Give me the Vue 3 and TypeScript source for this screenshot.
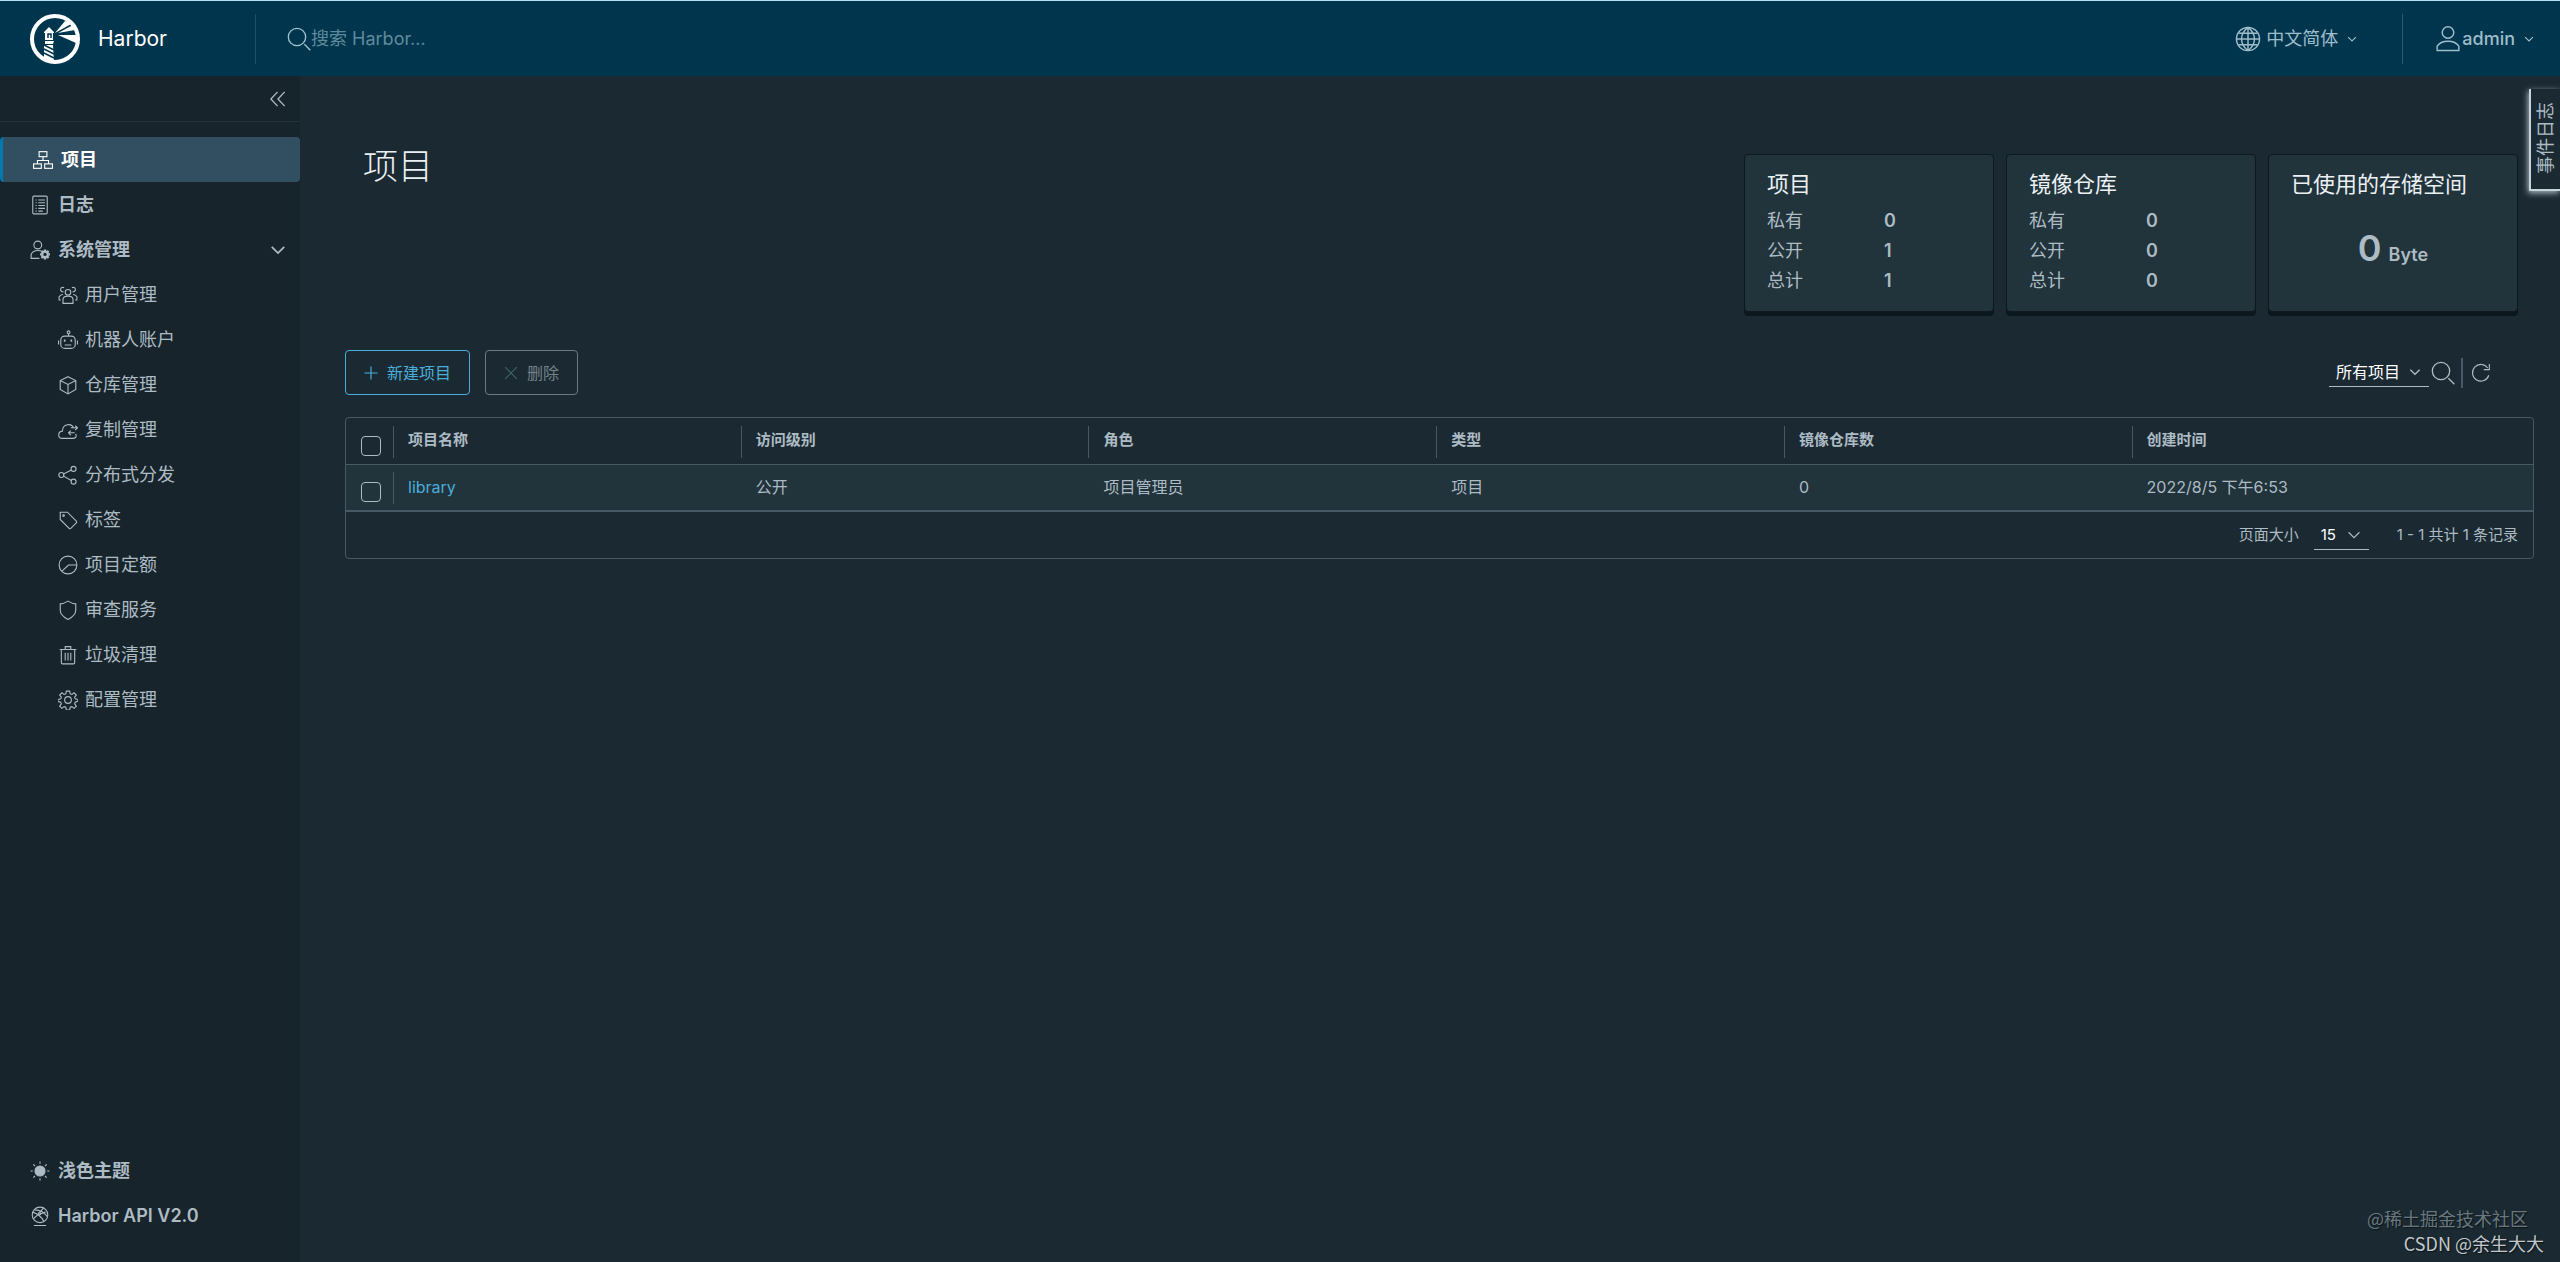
<script setup lang="ts">
import { ref } from 'vue'

interface NavItem {
  icon: string
  label: string
}

const icons: Record<string, string> = {
  projects:
    '<rect x="11" y="3" width="14" height="9"/><rect x="1" y="25" width="14" height="8"/><rect x="21" y="25" width="14" height="8"/><path d="M18 12v7M8 25v-6h20v6"/>',
  logs:
    '<rect x="5" y="2" width="26" height="32" rx="2"/><path d="M10 9h2M15 9h12M10 14h2M15 14h12M10 19h2M15 19h12M10 24h2M15 24h12M10 29h2M15 29h8"/>',
  admin:
    '<circle cx="14" cy="9" r="7"/><path d="M17 33H2v-7c2-5 7-7 12-7 2 0 4 0 6 1"/><circle cx="27" cy="26" r="5" stroke-width="4"/><path stroke-width="4" d="M27 17v3M27 32v3M18 26h3M33 26h3M20.600 19.600l2 2M31.400 30.400l2 2M33.400 19.600l-2 2M22.600 30.400l-2 2"/>',
  users:
    '<circle cx="18" cy="13" r="5"/><path d="M9 33v-8c1-4 5-5 9-5s8 1 9 5v8zM10 12a4 4 0 1 1 1-7M26 12a4 4 0 1 0-1-7M9 17c-4 0-6 2-7 4v6h3M27 17c4 0 6 2 7 4v6h-3"/>',
  robot:
    '<rect x="5" y="11" width="26" height="22" rx="7"/><circle cx="19" cy="4" r="2.500"/><path d="M19 7v4M1 19v7M35 19v7M12 27h12"/><path d="M12 17v4M24 17v4" stroke-width="3"/>',
  registry:
    '<path d="M18 3l14 7v16l-14 8-14-8V10zM4 10l14 7 14-7M18 17v17"/>',
  replication:
    '<path d="M32 25c2 6-1 8-5 8H8c-9 0-9-12 0-13 0-14 17-15 20-5M34 14H23M31 10l4 4-4 4M30 23H19M23 19l-4 4 4 4"/>',
  distribution:
    '<circle cx="6" cy="18" r="4.500"/><circle cx="28" cy="7" r="4.500"/><circle cx="28" cy="30" r="4.500"/><path d="M10 16l14-7M10 20l14 8"/>',
  labels:
    '<path d="M4 4h13l16 16c1 1 1 2 0 3L23 33c-1 1-2 1-3 0L4 17z"/><circle cx="10" cy="10" r="1.500"/>',
  quotas:
    '<circle cx="18" cy="18" r="16"/><path d="M34 18H19L7 29"/>',
  interrogation:
    '<path d="M18 2c5 3 10 5 14 5v11c0 8-6 13-14 17C10 31 4 26 4 18V7c4 0 9-2 14-5z"/>',
  trash:
    '<path d="M3 8h30M6 8v24c0 1 1 2 2 2h20c1 0 2-1 2-2V8M13 7V3h10v4M13 14v14M18 14v14M23 14v14"/>',
  config:
    '<circle cx="18" cy="18" r="6"/><path d="M15 2h6l1 5 3 1 4-3 4 4-3 4 1 3 5 1v3l-5 2-1 3 3 4-4 4-4-3-3 1-1 5h-6l-1-5-3-1-4 3-4-4 3-4-1-3-5-1v-4l5-1 1-3-3-4 4-4 4 3 3-1z"/>',
  sun:
    '<circle cx="18" cy="18" r="9" fill="currentColor"/><path d="M18 1v4M18 31v4M1 18h4M31 18h4M6 6l3 3M27 27l3 3M30 6l-3 3M9 27l-3 3"/>',
  api:
    '<circle cx="18" cy="16" r="14"/><path d="M7 35h22M8 7c8 0 17 3 23 12M5 11c9 3 16 8 20 17M17 12l8-9M14 16L6 23M17 15l11-4"/><circle cx="17" cy="14" r="2"/>',
  globe:
    '<circle cx="18" cy="18" r="16"/><path d="M18 2v32M2 18h32M5 10h26M5 26h26M18 2c-12 9-12 23 0 32M18 2c12 9 12 23 0 32"/>',
  user:
    '<circle cx="18" cy="9" r="8"/><path d="M3 34V28c3-5 9-7 15-7s12 2 15 7v6z"/>',
  search: '<circle cx="15" cy="15" r="13"/><path d="M26 26l9 9"/>',
  refresh: '<path d="M32 22A15 15 0 1 1 30 9M33 2v10H23"/>',
  down: '<path d="M4 11l14 14 14-14"/>',
  collapse: '<path d="M17 2L2 18l15 16M33 2L18 18l15 16"/>',
  plus: '<path d="M18 1v34M1 18h34"/>',
  close: '<path d="M3 3l30 30M33 3L3 33"/>',
}

const adminItems: NavItem[] = [
  { icon: 'users', label: '用户管理' },
  { icon: 'robot', label: '机器人账户' },
  { icon: 'registry', label: '仓库管理' },
  { icon: 'replication', label: '复制管理' },
  { icon: 'distribution', label: '分布式分发' },
  { icon: 'labels', label: '标签' },
  { icon: 'quotas', label: '项目定额' },
  { icon: 'interrogation', label: '审查服务' },
  { icon: 'trash', label: '垃圾清理' },
  { icon: 'config', label: '配置管理' },
]

const stats = [
  { title: '项目', rows: [['私有', 0], ['公开', 1], ['总计', 1]] },
  { title: '镜像仓库', rows: [['私有', 0], ['公开', 0], ['总计', 0]] },
]

const columns = ['项目名称', '访问级别', '角色', '类型', '镜像仓库数', '创建时间']
const projects = [
  { name: 'library', cells: ['公开', '项目管理员', '项目', '0', '2022/8/5 下午6:53'] },
]

const keyword = ref('')
const filter = ref('all')
const pageSize = ref('15')
const adminOpen = ref(true)
</script>

<template>
  <div class="app">
    <header class="header">
      <a class="brand" href="#">
        <svg class="logo" viewBox="0 0 50 50" aria-hidden="true">
          <circle cx="25" cy="25" r="23" fill="none" stroke="#fff" stroke-width="4" />
          <path
            fill="#fff"
            d="M14 18l5-5 5 5v1h-1v7H15v-7h-1zM15 27h9l-1 3h-8zM14 31h9l1 17-10-3z M25 19L35 7l8 2zM28 19L43 11l2 5zM28 21h19l-1 8z"
          />
          <path fill="none" stroke="#00364d" stroke-width="1.500" d="M14 31l10 5M14 35l10 5M14 39l10 5" />
          <path d="M18 24v-4h3v4" fill="none" stroke="#00364d" stroke-width="1.500" />
        </svg>
        <span>Harbor</span>
      </a>
      <label class="search">
        <svg class="icon i24" viewBox="0 0 36 36" v-html="icons.search" />
        <input v-model="keyword" type="text" placeholder="搜索 Harbor..." aria-label="搜索" />
      </label>
      <div class="actions">
        <button class="menu language" type="button">
          <svg class="icon i26" viewBox="0 0 36 36" v-html="icons.globe" />
          <span>中文简体</span>
          <svg class="icon i10 caret" viewBox="0 0 36 36" v-html="icons.down" />
        </button>
        <button class="menu account" type="button">
          <svg class="icon i26" viewBox="0 0 36 36" v-html="icons.user" />
          <span>admin</span>
          <svg class="icon i10 caret" viewBox="0 0 36 36" v-html="icons.down" />
        </button>
      </div>
    </header>

    <div class="body">
      <nav class="sidebar">
        <div class="collapse">
          <button type="button" aria-label="收起">
            <svg class="icon i16" viewBox="0 0 36 36" v-html="icons.collapse" />
          </button>
        </div>
        <a class="nav active" href="#">
          <svg class="icon i20" viewBox="0 0 36 36" v-html="icons.projects" />项目
        </a>
        <a class="nav" href="#">
          <svg class="icon i20" viewBox="0 0 36 36" v-html="icons.logs" />日志
        </a>
        <button class="nav" type="button" :aria-expanded="adminOpen" @click="adminOpen = !adminOpen">
          <svg class="icon i20" viewBox="0 0 36 36" v-html="icons.admin" />系统管理
          <svg class="icon i16 toggle" viewBox="0 0 36 36" v-html="icons.down" />
        </button>
        <template v-if="adminOpen">
          <a v-for="item in adminItems" :key="item.label" class="nav sub" href="#">
            <svg class="icon i20" viewBox="0 0 36 36" v-html="icons[item.icon]" />{{ item.label }}
          </a>
        </template>
        <div class="nav-bottom">
          <button class="nav" type="button">
            <svg class="icon i20" viewBox="0 0 36 36" v-html="icons.sun" />浅色主题
          </button>
          <a class="nav" href="#">
            <svg class="icon i20" viewBox="0 0 36 36" v-html="icons.api" />Harbor API V2.0
          </a>
        </div>
      </nav>

      <main class="main">
        <div class="top">
          <h1>项目</h1>
          <div class="cards">
            <section v-for="card in stats" :key="card.title" class="card">
              <h2>{{ card.title }}</h2>
              <dl>
                <template v-for="row in card.rows" :key="row[0]">
                  <dt>{{ row[0] }}</dt>
                  <dd>{{ row[1] }}</dd>
                </template>
              </dl>
            </section>
            <section class="card">
              <h2>已使用的存储空间</h2>
              <p class="storage"><strong>0</strong><span>Byte</span></p>
            </section>
          </div>
        </div>

        <div class="toolbar">
          <button class="btn primary" type="button">
            <svg class="icon i14" viewBox="0 0 36 36" v-html="icons.plus" />新建项目
          </button>
          <button class="btn" type="button" disabled>
            <svg class="icon i14" viewBox="0 0 36 36" v-html="icons.close" />删除
          </button>
          <div class="filters">
            <span class="select project-filter">
              <select v-model="filter" aria-label="项目类型">
                <option value="all">所有项目</option>
              </select>
              <svg class="icon i12" viewBox="0 0 36 36" v-html="icons.down" />
            </span>
            <button class="tool" type="button" aria-label="搜索">
              <svg class="icon i24" viewBox="0 0 36 36" v-html="icons.search" />
            </button>
            <button class="tool reload" type="button" aria-label="刷新">
              <svg class="icon i20" viewBox="0 0 36 36" v-html="icons.refresh" />
            </button>
          </div>
        </div>

        <div class="datagrid">
          <table>
            <colgroup>
              <col class="col-check" />
              <col v-for="n in 5" :key="n" class="col-data" />
              <col />
            </colgroup>
            <thead>
              <tr>
                <th><input type="checkbox" aria-label="全选" /></th>
                <th v-for="column in columns" :key="column" scope="col">
                  <div class="cell divided">{{ column }}</div>
                </th>
              </tr>
            </thead>
            <tbody>
              <tr v-for="project in projects" :key="project.name">
                <td><input type="checkbox" :aria-label="project.name" /></td>
                <td><div class="cell divided"><a href="#">{{ project.name }}</a></div></td>
                <td v-for="(cell, i) in project.cells" :key="i"><div class="cell">{{ cell }}</div></td>
              </tr>
            </tbody>
          </table>
          <footer class="pager">
            <label for="page-size">页面大小</label>
            <span class="select page-size">
              <select id="page-size" v-model="pageSize">
                <option value="15">15</option>
              </select>
              <svg class="icon i14" viewBox="0 0 36 36" v-html="icons.down" />
            </span>
            <span>1 - 1 共计 1 条记录</span>
          </footer>
        </div>
      </main>
    </div>

    <button class="event-log" type="button"><span>事件日志</span></button>
    <div class="credits">
      <span class="faint">@稀土掘金技术社区</span>
      <span>CSDN @余生大大</span>
    </div>
  </div>
</template>

<style>
body {
  margin: 0;
  background: #1b2a32;
}
</style>

<style scoped>
* {
  box-sizing: border-box;
}
.app {
  position: relative;
  display: flex;
  flex-direction: column;
  min-height: 100vh;
  color: #adbbc4;
  background: #1b2a32;
  font: 400 18px/24px Inter, "Noto Sans CJK SC", sans-serif;
}
button,
input,
select {
  margin: 0;
  padding: 0;
  border: 0;
  background: none;
  color: inherit;
  font: inherit;
}
a {
  color: inherit;
  text-decoration: none;
}
.icon {
  flex: none;
  display: block;
  fill: none;
  stroke: currentColor;
  stroke-width: 2;
}
.i10 { width: 10px; height: 10px; stroke-width: 4; }
.i12 { width: 12px; height: 12px; stroke-width: 4; }
.i14 { width: 14px; height: 14px; stroke-width: 3; }
.i16 { width: 16px; height: 16px; stroke-width: 3; }
.i20 { width: 20px; height: 20px; }
.i24 { width: 24px; height: 24px; }
.i26 { width: 26px; height: 26px; }

.header {
  display: flex;
  align-items: center;
  height: 76px;
  padding-top: 1px;
  border-top: 1px solid #b4e1f5;
  background: #00364d;
}
.brand {
  display: flex;
  align-items: center;
  gap: 18px;
  width: 255px;
  padding-left: 30px;
  color: #fff;
  font-size: 21px;
}
.logo {
  width: 50px;
  height: 50px;
}
.search {
  display: flex;
  align-items: center;
  flex: 1;
  height: 50px;
  padding-left: 31px;
  border-left: 1px solid #1f4f63;
  color: #9fc3d1;
}
.search input {
  width: 300px;
  outline: 0;
}
.search input::placeholder {
  color: #5f8a9b;
  opacity: 1;
}
.actions {
  display: flex;
}
.menu {
  display: flex;
  align-items: center;
  height: 50px;
  color: #9fbccb;
}
.language {
  gap: 5px;
  padding-right: 45px;
}
.account {
  gap: 1px;
  padding: 0 26px 0 32px;
  border-left: 1px solid #2b5a6e;
  font-weight: 500;
}
.caret {
  margin-left: 4px;
}
.account .caret {
  margin-left: 8px;
}

.body {
  display: flex;
  flex: 1;
}
.sidebar {
  display: flex;
  flex-direction: column;
  width: 300px;
  background: #17242b;
}
.collapse {
  display: flex;
  justify-content: flex-end;
  height: 46px;
  margin-bottom: 15px;
  padding-right: 14px;
  border-bottom: 1px solid #22343c;
}
.nav {
  display: flex;
  align-items: center;
  gap: 8px;
  height: 45px;
  padding: 0 14px 0 30px;
  font-weight: 700;
  text-align: left;
}
.nav.active {
  border-left: 3px solid #0079ad;
  border-radius: 4px;
  background: #324f62;
  color: #fff;
}
.nav.sub {
  gap: 7px;
  padding-left: 58px;
  font-weight: 400;
}
.toggle {
  margin-left: auto;
  stroke-width: 4;
}
.nav-bottom {
  display: flex;
  flex-direction: column;
  margin-top: auto;
  padding-bottom: 24px;
}
.nav-bottom .nav {
  font-weight: 600;
}

.main {
  flex: 1;
  padding: 78px 26px 0 45px;
}
.top {
  display: flex;
  justify-content: space-between;
  padding: 0 16px 0 18px;
}
h1 {
  margin: 0;
  color: #eaf0f4;
  font-size: 35px;
  font-weight: 300;
  line-height: 24px;
}
.cards {
  display: flex;
  gap: 12px;
}
.card {
  width: 250px;
  height: 158px;
  padding: 13px 22px;
  border: 1px solid #0f181d;
  border-radius: 4px;
  background: #21333b;
  box-shadow: 0 4px 0 #0b171d;
}
.card h2 {
  margin: 0;
  color: #eaf0f4;
  font-size: 22px;
  font-weight: 400;
  line-height: 32px;
}
dl {
  display: grid;
  grid-template-columns: 117px 1fr;
  margin: 6px 0 0;
  line-height: 30px;
}
dd {
  margin: 0;
  font-weight: 600;
}
.storage {
  display: flex;
  justify-content: center;
  align-items: baseline;
  gap: 7px;
  margin: 26px 0 0;
  font-weight: 600;
  line-height: 44px;
}
.storage strong {
  font-size: 36px;
  font-weight: 600;
}

.toolbar {
  display: flex;
  gap: 15px;
  margin-top: 38px;
}
.btn {
  display: flex;
  align-items: center;
  gap: 9px;
  height: 45px;
  padding: 0 18px;
  border: 1px solid #6c7980;
  border-radius: 4px;
  color: #74818a;
  font-size: 16px;
}
.btn .icon {
  color: #3c6468;
}
.btn.primary {
  border-color: #4aaed9;
  color: #4aaed9;
}
.btn.primary .icon {
  color: #4aaed9;
}
.filters {
  display: flex;
  align-items: center;
  margin-left: auto;
  padding-right: 43px;
}
.select {
  display: flex;
  align-items: center;
  border-bottom: 1px solid #adbbc4;
}
.select select {
  flex: 1;
  width: 100%;
  height: 100%;
  margin-right: -24px;
  padding-left: 7px;
  appearance: none;
  outline: 0;
  color: #fff;
}
.select .icon {
  margin-right: 8px;
  pointer-events: none;
}
.project-filter {
  width: 100px;
  height: 29px;
  font-size: 16px;
}
.tool {
  padding-left: 2px;
}
.reload {
  display: flex;
  align-items: center;
  height: 30px;
  margin-left: 6px;
  padding-left: 8px;
  border-left: 2px solid #495865;
}

.datagrid {
  margin-top: 22px;
  border: 1px solid #495865;
  border-radius: 4px;
}
table {
  width: 100%;
  table-layout: fixed;
  border-spacing: 0;
  font-size: 16px;
}
.col-check {
  width: 47px;
}
.col-data {
  width: 15.9%;
}
th,
td {
  height: 47px;
  padding: 0;
  vertical-align: top;
  text-align: left;
}
th {
  padding-top: 8px;
  border-bottom: 1px solid #495865;
  font-size: 15px;
}
td {
  padding-top: 7px;
  border-bottom: 2px solid #495865;
  background: #21333b;
}
.cell {
  height: 32px;
  padding-left: 14px;
  border-left: 1px solid transparent;
  line-height: 30px;
}
th .cell {
  line-height: 28px;
}
.cell.divided {
  border-color: #495865;
}
td a {
  color: #4aaed9;
}
input[type='checkbox'] {
  display: block;
  width: 20px;
  height: 20px;
  margin: 10px 0 0 15px;
  appearance: none;
  border: 1px solid #adbbc4;
  border-radius: 4px;
}
.pager {
  display: flex;
  align-items: center;
  justify-content: flex-end;
  height: 46px;
  padding-right: 15px;
  font-size: 15px;
}
.page-size {
  width: 55px;
  height: 30px;
  margin: 0 28px 0 15px;
}

.event-log {
  position: absolute;
  top: 89px;
  right: 0;
  width: 31px;
  height: 102px;
  padding-top: 4px;
  border: solid #c8d3d9;
  border-width: 0 0 2px 2px;
  box-shadow: -1px 2px 6px #adbbc4;
  background: #1b2a32;
}
.event-log span {
  writing-mode: vertical-rl;
  text-orientation: sideways;
  transform: rotate(180deg);
  display: inline-block;
}
.credits {
  position: absolute;
  right: 16px;
  bottom: 6px;
  display: flex;
  flex-direction: column;
  align-items: flex-end;
  color: #c3c8cb;
  font: 400 18px/25px "Noto Sans CJK SC", sans-serif;
  text-shadow: 1px 1px 1px #0b1419;
}
.credits .faint {
  padding-right: 16px;
  color: #6a777f;
}
</style>
